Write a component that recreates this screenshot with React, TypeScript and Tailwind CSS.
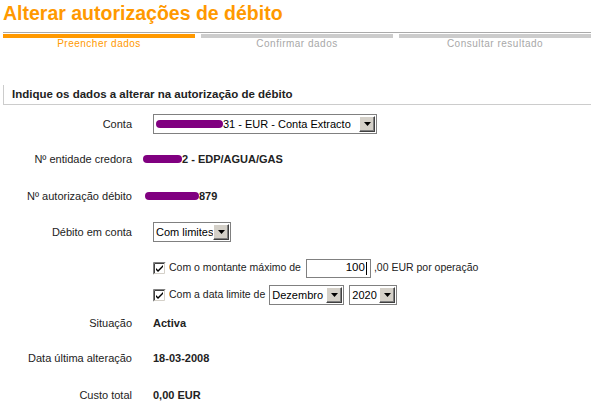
import React from "react";

// Windows-classic style dropdown
function Select({ width, children }: { width: string; children: React.ReactNode }) {
  return (
    <div className={`${width} h-[20px] border border-[#808080] bg-white flex items-center`}>
      <div className="flex-1 flex items-center pl-[2px] overflow-hidden whitespace-nowrap text-[11px] text-black">
        {children}
      </div>
      <div className="w-[16px] h-[16px] mr-[1px] bg-[#d4d0c8] border-t border-l border-t-white border-l-white border-r border-b border-r-[#404040] border-b-[#404040] shadow-[inset_-1px_-1px_#808080] flex items-center justify-center">
        <svg width="7" height="4" viewBox="0 0 7 4">
          <polygon points="0,0 7,0 3.5,4" fill="#000" />
        </svg>
      </div>
    </div>
  );
}

function Checkbox() {
  return (
    <svg width="13" height="13" viewBox="0 0 13 13" className="shrink-0">
      <rect x="0" y="0" width="13" height="13" fill="#fff" />
      <path d="M0.5 12.5V0.5H12.5" stroke="#808080" fill="none" />
      <path d="M1.5 11.5V1.5H11.5" stroke="#404040" fill="none" />
      <path d="M0.5 12.5H12.5V0.5" stroke="#fff" fill="none" />
      <path d="M1.5 11.5H11.5V1.5" stroke="#d4d0c8" fill="none" />
      <path d="M3 6l2 2 5-5v2l-5 5-2-2z" fill="#000" />
    </svg>
  );
}

function Blob({ className }: { className: string }) {
  return <span className={`inline-block bg-[#800080] rounded-full ${className}`} />;
}

function Row({
  label,
  className,
  children,
}: {
  label?: string;
  className: string;
  children: React.ReactNode;
}) {
  return (
    <div className={`flex items-center h-[20px] ${className}`}>
      <div className="w-[132px] text-right whitespace-nowrap">{label}</div>
      <div className="ml-[21px] flex items-center whitespace-nowrap">{children}</div>
    </div>
  );
}

export default function App() {
  const steps = [
    { name: "Preencher dados", active: true },
    { name: "Confirmar dados", active: false },
    { name: "Consultar resultado", active: false },
  ];

  return (
    <div
      className="w-[595px] h-[415px] bg-white overflow-hidden text-[11px] text-[#222]"
      style={{ fontFamily: '"Liberation Sans", Arial, sans-serif' }}
    >
      {/* Title */}
      <h1 className="pl-[3px] pt-[2px] text-[19.5px] leading-[22px] font-bold text-[#ff9900]">
        Alterar autorizações de débito
      </h1>

      {/* Steps */}
      <div className="ml-[3px] mr-[4px] mt-[8px] border-t border-[#aaaaaa] pt-[1px]">
        <div className="grid grid-cols-3 gap-[6px]">
          {steps.map((s) => (
            <div key={s.name}>
              <div className={`h-[4px] ${s.active ? "bg-[#ff9900]" : "bg-[#cccccc]"}`} />
              <div
                className={`text-center text-[10px] leading-[12px] tracking-[0.5px] ${
                  s.active ? "text-[#ff9900]" : "text-[#a8a8a8]"
                }`}
              >
                {s.name}
              </div>
            </div>
          ))}
        </div>
      </div>

      {/* Section header */}
      <div className="ml-[3px] mr-[4px] mt-[35px] h-[20px] border-l border-b border-[#cccccc] flex items-center pl-[8px]">
        <span className="text-[11.5px] font-bold text-[#222]">
          Indique os dados a alterar na autorização de débito
        </span>
      </div>

      {/* Form */}
      <Row label="Conta" className="mt-[9px]">
        <Select width="w-[224px]">
          <Blob className="w-[67px] h-[8px]" />
          <span>31 - EUR - Conta Extracto</span>
        </Select>
      </Row>

      <Row label="Nº entidade credora" className="mt-[15px]">
        <Blob className="w-[39px] h-[8px] ml-[-10px]" />
        <span className="font-bold">2 - EDP/AGUA/GAS</span>
      </Row>

      <Row label="Nº autorização débito" className="mt-[17px]">
        <Blob className="w-[54px] h-[8px] ml-[-8px]" />
        <span className="font-bold">879</span>
      </Row>

      <Row label="Débito em conta" className="mt-[16px]">
        <Select width="w-[78px]">Com limites</Select>
      </Row>

      <Row className="mt-[16px]">
        <Checkbox />
        <span className="ml-[3px] text-[10.5px]">Com o montante máximo de</span>
        <div className="ml-[5px] w-[65px] h-[19px] border border-[#808080] bg-white flex items-center justify-end pr-[3px] text-[11.5px] text-black">
          100
          <span className="inline-block w-px h-[13px] bg-black ml-[1px]" />
        </div>
        <span className="ml-[3px] text-[10.5px]">,00 EUR por operação</span>
      </Row>

      <Row className="mt-[7px]">
        <Checkbox />
        <span className="ml-[3px] text-[10.5px]">Com a data limite de</span>
        <div className="ml-[4px]">
          <Select width="w-[75px]">Dezembro</Select>
        </div>
        <div className="ml-[5px]">
          <Select width="w-[48px]">2020</Select>
        </div>
      </Row>

      <Row label="Situação" className="mt-[8px]">
        <span className="font-bold">Activa</span>
      </Row>

      <Row label="Data última alteração" className="mt-[15px]">
        <span className="font-bold">18-03-2008</span>
      </Row>

      <Row label="Custo total" className="mt-[17px]">
        <span className="font-bold">0,00 EUR</span>
      </Row>
    </div>
  );
}
